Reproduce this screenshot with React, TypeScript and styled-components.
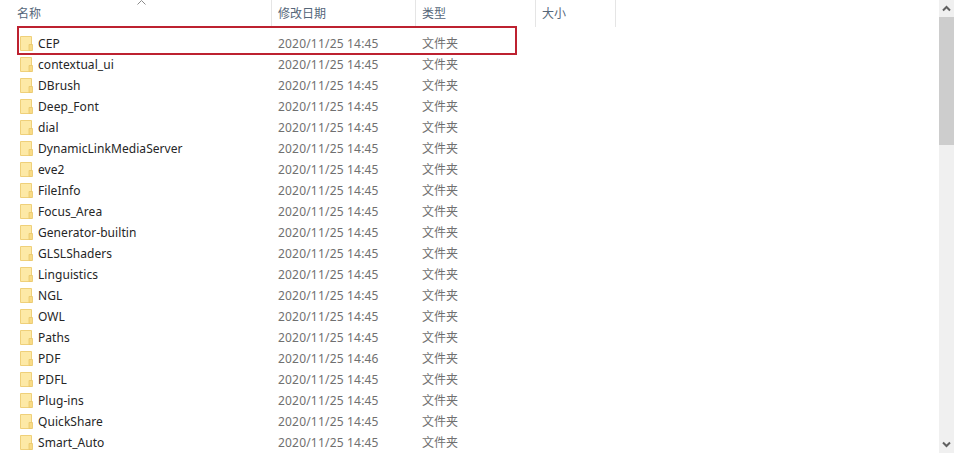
import styled, { createGlobalStyle } from 'styled-components';

const GlobalStyle = createGlobalStyle`
  html, body {
    margin: 0;
    padding: 0;
    background: #fff;
    overflow: hidden;
  }
`;

const Window = styled.div`
  position: relative;
  width: 955px;
  height: 453px;
  display: flex;
  overflow: hidden;
  background: #fff;
  font-family: "Noto Sans", "Noto Sans CJK SC", sans-serif;
  font-size: 12px;
`;

const Pane = styled.div`
  flex: 1;
  display: flex;
  flex-direction: column;
  overflow: hidden;
`;

const Header = styled.div`
  position: relative;
  display: grid;
  grid-template-columns: 272px 144px 120px 80px;
  height: 28px;
  flex: none;
`;

const HeaderCell = styled.div<{ $indent: number }>`
  height: 27px;
  box-sizing: border-box;
  padding: 5px 0 0 ${(p) => p.$indent}px;
  border-right: 1px solid #e5e5e5;
  color: #556679;
  line-height: 18px;
`;

const SortCaret = styled.svg`
  position: absolute;
  left: 137px;
  top: 0;
`;

const Rows = styled.div`
  display: flex;
  flex-direction: column;
  padding-top: 5px;
`;

const Row = styled.div`
  display: grid;
  grid-template-columns: 272px 144px 120px;
  height: 21px;
  align-items: center;
  line-height: 21px;
`;

const NameCell = styled.div`
  display: flex;
  align-items: center;
  gap: 5px;
  padding-left: 20px;
  color: #262626;
  letter-spacing: 0.06px;
`;

const DateCell = styled.div`
  padding-left: 6px;
  color: #707070;
  letter-spacing: 0.19px;
`;

const TypeCell = styled.div`
  padding-left: 6px;
  color: #707070;
`;

const Highlight = styled.div`
  position: absolute;
  left: 17px;
  top: 26px;
  width: 500px;
  height: 29px;
  box-sizing: border-box;
  border: 2px solid #bd2130;
`;

const Scrollbar = styled.div`
  width: 15px;
  margin-right: 1px;
  flex: none;
  display: flex;
  flex-direction: column;
  background: #f0f0f0;
`;

const ArrowButton = styled.div`
  height: 17px;
  flex: none;
  display: flex;
  align-items: center;
  justify-content: center;
`;

const Track = styled.div`
  flex: 1;
`;

const Thumb = styled.div`
  height: 128px;
  background: #cdcdcd;
`;

const names = [
  'CEP',
  'contextual_ui',
  'DBrush',
  'Deep_Font',
  'dial',
  'DynamicLinkMediaServer',
  'eve2',
  'FileInfo',
  'Focus_Area',
  'Generator-builtin',
  'GLSLShaders',
  'Linguistics',
  'NGL',
  'OWL',
  'Paths',
  'PDF',
  'PDFL',
  'Plug-ins',
  'QuickShare',
  'Smart_Auto',
];

const FolderIcon = () => (
  <svg width="13" height="15" viewBox="0 0 13 15">
    <path d="M0.5 0.5h11v14H0.5z" fill="#fde9a6" stroke="#efd07a" />
    <path d="M9 14.5V8.5h3.5v6z" fill="#f9db85" stroke="#e9c76b" strokeWidth="0.8" />
  </svg>
);

const Arrow = ({ down }: { down?: boolean }) => (
  <svg width="9" height="7" viewBox="0 0 9 7">
    <path d={down ? 'M1 1.5l3.5 3.5L8 1.5' : 'M1 5.5L4.5 2L8 5.5'} fill="none" stroke="#606060" strokeWidth="2" />
  </svg>
);

const App = () => (
  <Window>
    <GlobalStyle />
    <Pane>
      <Header>
        <HeaderCell $indent={17}>名称</HeaderCell>
        <HeaderCell $indent={6}>修改日期</HeaderCell>
        <HeaderCell $indent={6}>类型</HeaderCell>
        <HeaderCell $indent={6}>大小</HeaderCell>
        <SortCaret width="9" height="5" viewBox="0 0 9 5">
          <path d="M0.5 4.5L4.5 0.5L8.5 4.5" fill="none" stroke="#8a8a8a" />
        </SortCaret>
      </Header>
      <Rows>
        {names.map((name) => (
          <Row key={name}>
            <NameCell>
              <FolderIcon />
              {name}
            </NameCell>
            <DateCell>{name === 'PDF' ? '2020/11/25 14:46' : '2020/11/25 14:45'}</DateCell>
            <TypeCell>文件夹</TypeCell>
          </Row>
        ))}
      </Rows>
    </Pane>
    <Scrollbar>
      <ArrowButton>
        <Arrow />
      </ArrowButton>
      <Thumb />
      <Track />
      <ArrowButton>
        <Arrow down />
      </ArrowButton>
    </Scrollbar>
    <Highlight />
  </Window>
);

export default App;
